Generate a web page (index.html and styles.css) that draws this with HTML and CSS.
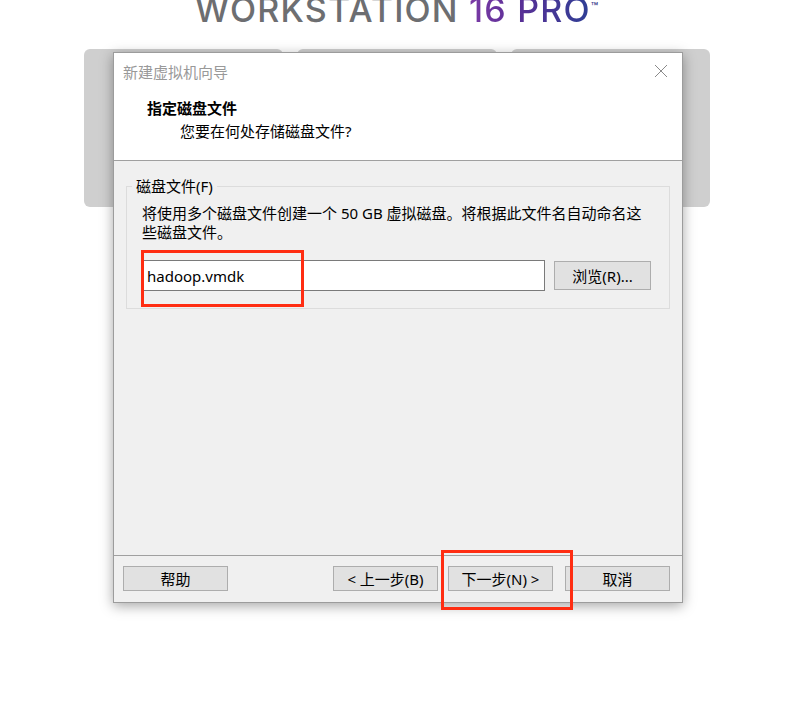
FILE: index.html
```html
<!DOCTYPE html>
<html lang="zh-CN">
    <head>
        <meta charset="UTF-8">
        <title>新建虚拟机向导</title>
        <link rel="stylesheet" href="styles.css">
    </head>
    <body>
        <div class="logo">WORKSTATION <span class="accent">16 PRO</span><span class="tm">™</span></div>

        <div class="stage">
            <!-- 背后被遮暗的主界面卡片 -->
            <div class="cards">
                <div class="card"></div>
                <div class="card"></div>
                <div class="card"></div>
            </div>

            <div class="dialog">
                <div class="titlebar">
                    <span class="title">新建虚拟机向导</span>
                    <svg class="close" width="14" height="14" viewBox="0 0 14 14">
                        <path d="M1 1 L13 13 M13 1 L1 13" stroke="#8a8a8a" stroke-width="1" fill="none"/>
                    </svg>
                </div>
                <div class="header">
                    <h2>指定磁盘文件</h2>
                    <p>您要在何处存储磁盘文件?</p>
                </div>
                <div class="content">
                    <fieldset class="group">
                        <legend>磁盘文件(F)</legend>
                        <p class="desc">将使用多个磁盘文件创建一个 50 GB 虚拟磁盘。将根据此文件名自动命名这些磁盘文件。</p>
                        <div class="file-row">
                            <input type="text" class="file-input" value="hadoop.vmdk">
                            <button class="btn browse">浏览(R)...</button>
                        </div>
                    </fieldset>
                </div>
                <div class="footer">
                    <button class="btn">帮助</button>
                    <div class="nav">
                        <button class="btn">&lt; 上一步(B)</button>
                        <button class="btn">下一步(N) &gt;</button>
                    </div>
                    <button class="btn cancel">取消</button>
                </div>
            </div>

            <!-- 标注红框 -->
            <div class="mark mark-file"></div>
            <div class="mark mark-next"></div>
        </div>
    </body>
</html>
```

FILE: styles.css
```css
body {
    margin: 0;
    padding: 0;
    width: 802px;
    height: 707px;
    overflow: hidden;
    background: #fff;
    font-family: "Noto Sans", "Noto Sans CJK SC", sans-serif;
    font-size: 15px;
    color: #000;
}
.logo {
    height: 49px;
    margin-top: -7px;
    margin-bottom: 7px;
    padding-left: 195px;
    font-family: Inter, "Liberation Sans", sans-serif;
    font-size: 34px;
    font-weight: 500;
    line-height: 34px;
    letter-spacing: 1.2px;
    color: #6d6e71;
    white-space: nowrap;
}
.logo .accent {
    background: linear-gradient(90deg, #7b3aa6, #5a2f96 40%, #2e3f95);
    -webkit-background-clip: text;
    background-clip: text;
    color: transparent;
}
.logo .tm {
    font-size: 12px;
    line-height: 0;
    vertical-align: 11px;
    color: #3a3f8c;
    letter-spacing: 0;
}
.stage {
    position: relative;
    display: grid;
}
.cards,
.dialog {
    grid-area: 1 / 1;
    align-self: start;
}
.cards {
    margin-left: 84px;
    width: 626px;
    height: 158px;
    display: flex;
    gap: 14px;
}
.card {
    flex: 1;
    background: #cfcfcf;
    border-radius: 6px;
}
.dialog {
    margin-left: 113px;
    margin-top: 3px;
    width: 568px;
    height: 549px;
    border: 1px solid #9c9c9c;
    background: #f0f0f0;
    box-shadow: 0 3px 12px rgba(0, 0, 0, 0.35);
    display: flex;
    flex-direction: column;
}
.titlebar {
    height: 39px;
    box-sizing: border-box;
    padding: 0 14px 3px 9px;
    background: #fff;
    display: flex;
    align-items: center;
    justify-content: space-between;
}
.title {
    color: #999;
}
.header {
    height: 68px;
    background: #fff;
    border-bottom: 1px solid #a0a0a0;
}
.header h2 {
    margin: 5px 0 0 33px;
    font-size: 15px;
    line-height: 22px;
    font-weight: bold;
}
.header p {
    margin: 1px 0 0 66px;
    line-height: 22px;
}
.content {
    flex: 1;
    padding: 15px 12px 0 12px;
}
.group {
    margin: 0;
    padding: 0 15px 17px 15px;
    border: 1px solid #dcdcdc;
}
.group legend {
    margin-left: -10px;
    padding: 0 4px;
    line-height: 20px;
}
.desc {
    margin: 8px 0 0 0;
    line-height: 19px;
}
.file-row {
    margin-top: 18px;
    display: flex;
    align-items: center;
    gap: 9px;
}
.file-input {
    width: 393px;
    height: 29px;
    box-sizing: content-box;
    margin: 0;
    padding: 0 4px;
    border: 1px solid #7a7a7a;
    background: #fff;
    font-family: inherit;
    font-size: 15px;
    color: #000;
    outline: none;
}
.btn {
    width: 105px;
    height: 25px;
    margin: 0;
    padding: 0;
    border: 1px solid #adadad;
    background: #e1e1e1;
    font-family: inherit;
    font-size: 15px;
    line-height: 22px;
    color: #000;
}
.browse {
    width: 97px;
    height: 29px;
}
.footer {
    height: 47px;
    border-top: 1px solid #a0a0a0;
    display: flex;
    align-items: flex-start;
    padding: 10px 12px 0 9px;
    box-sizing: border-box;
}
.nav {
    margin-left: auto;
    display: flex;
    gap: 10px;
}
.cancel {
    margin-left: 12px;
}
.mark {
    position: absolute;
    border: 3px solid #ff2d12;
    box-sizing: border-box;
}
.mark-file {
    left: 141px;
    top: 201px;
    width: 163px;
    height: 57px;
}
.mark-next {
    left: 441px;
    top: 501px;
    width: 132px;
    height: 60px;
}
```
